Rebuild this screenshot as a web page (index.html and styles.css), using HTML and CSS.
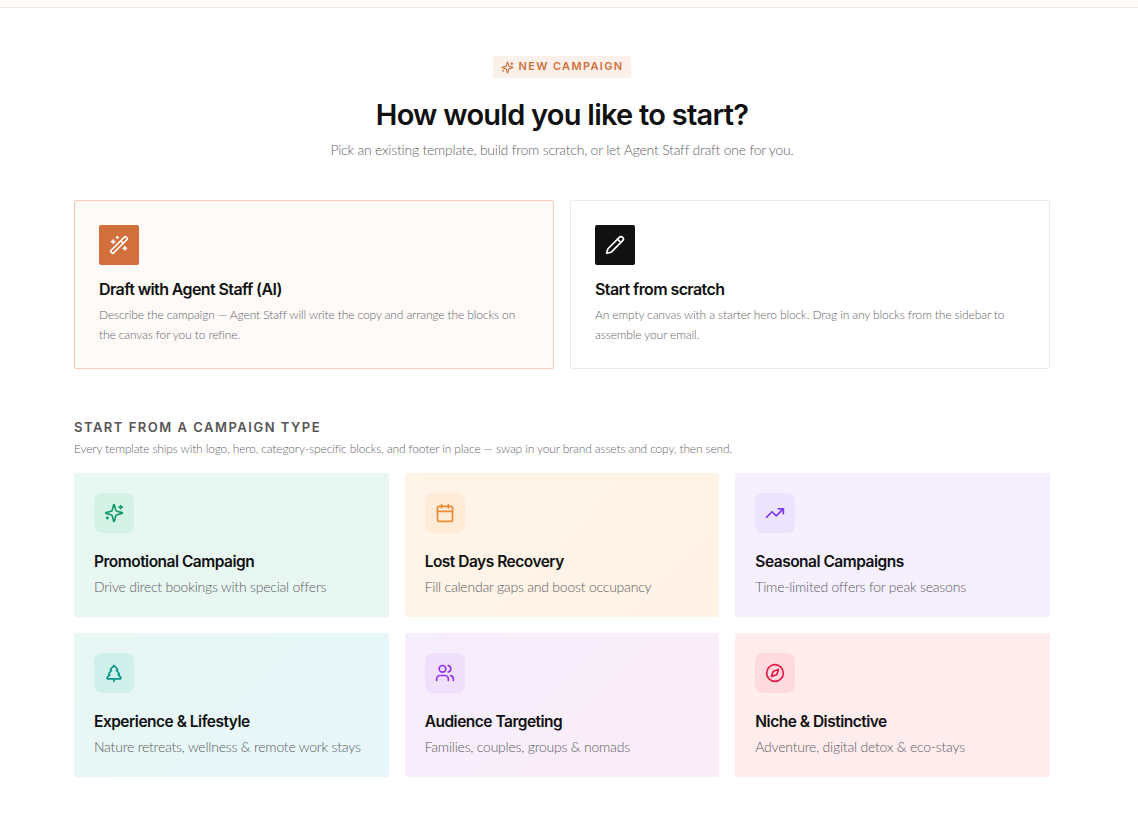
FILE: index.html
```html
<!DOCTYPE html>
<html lang="en">
<head>
<meta charset="utf-8">
<title>New campaign</title>
<link rel="stylesheet" href="styles.css">
</head>
<body>
<div class="topbar"></div>
<main class="page">
  <header class="hero">
    <span class="pill">
      <svg class="i i-12" viewBox="0 0 24 24"><path d="M9.937 15.5A2 2 0 0 0 8.5 14.063l-6.135-1.582a.5.5 0 0 1 0-.962L8.5 9.936A2 2 0 0 0 9.937 8.5l1.582-6.135a.5.5 0 0 1 .963 0L14.063 8.5A2 2 0 0 0 15.5 9.937l6.135 1.581a.5.5 0 0 1 0 .964L15.5 14.063a2 2 0 0 0-1.437 1.437l-1.582 6.135a.5.5 0 0 1-.963 0z"/><path d="M20 3v4M22 5h-4M4 17v2M5 18H3"/></svg>
      NEW CAMPAIGN
    </span>
    <h1>How would you like to start?</h1>
    <p class="lead">Pick an existing template, build from scratch, or let Agent Staff draft one for you.</p>
  </header>

  <section class="starts">
    <article class="start start-ai">
      <div class="start-icon icon-orange">
        <svg class="i i-20" viewBox="0 0 24 24"><path d="m21.64 3.64-1.28-1.28a1.21 1.21 0 0 0-1.72 0L2.36 18.64a1.21 1.21 0 0 0 0 1.72l1.28 1.28a1.2 1.2 0 0 0 1.72 0L21.64 5.36a1.2 1.2 0 0 0 0-1.72"/><path d="m14 7 3 3M5 6v4M19 14v4M10 2v2M7 8H3M21 16h-4M11 3H9"/></svg>
      </div>
      <h2>Draft with Agent Staff (AI)</h2>
      <p>Describe the campaign — Agent Staff will write the copy and arrange the blocks on the canvas for you to refine.</p>
    </article>
    <article class="start">
      <div class="start-icon icon-black">
        <svg class="i i-20" viewBox="0 0 24 24"><path d="M21.174 6.812a1 1 0 0 0-3.986-3.987L3.842 16.174a2 2 0 0 0-.5.83l-1.321 4.352a.5.5 0 0 0 .623.622l4.353-1.32a2 2 0 0 0 .83-.497z"/><path d="m15 5 4 4"/></svg>
      </div>
      <h2>Start from scratch</h2>
      <p>An empty canvas with a starter hero block. Drag in any blocks from the sidebar to assemble your email.</p>
    </article>
  </section>

  <section class="types">
    <h3>START FROM A CAMPAIGN TYPE</h3>
    <p class="types-sub">Every template ships with logo, hero, category-specific blocks, and footer in place — swap in your brand assets and copy, then send.</p>
    <div class="grid">
      <article class="type t-green">
        <div class="type-icon"><svg class="i i-20" viewBox="0 0 24 24"><path d="M9.937 15.5A2 2 0 0 0 8.5 14.063l-6.135-1.582a.5.5 0 0 1 0-.962L8.5 9.936A2 2 0 0 0 9.937 8.5l1.582-6.135a.5.5 0 0 1 .963 0L14.063 8.5A2 2 0 0 0 15.5 9.937l6.135 1.581a.5.5 0 0 1 0 .964L15.5 14.063a2 2 0 0 0-1.437 1.437l-1.582 6.135a.5.5 0 0 1-.963 0z"/><path d="M20 3v4M22 5h-4M4 17v2M5 18H3"/></svg></div>
        <h4>Promotional Campaign</h4>
        <p>Drive direct bookings with special offers</p>
      </article>
      <article class="type t-orange">
        <div class="type-icon"><svg class="i i-20" viewBox="0 0 24 24"><path d="M8 2v4M16 2v4M3 10h18"/><rect x="3" y="4" width="18" height="18" rx="2"/></svg></div>
        <h4>Lost Days Recovery</h4>
        <p>Fill calendar gaps and boost occupancy</p>
      </article>
      <article class="type t-violet">
        <div class="type-icon"><svg class="i i-20" viewBox="0 0 24 24"><path d="M22 7l-8.500 8.500-5-5L2 17"/><path d="M16 7h6v6"/></svg></div>
        <h4>Seasonal Campaigns</h4>
        <p>Time-limited offers for peak seasons</p>
      </article>
      <article class="type t-teal">
        <div class="type-icon"><svg class="i i-20" viewBox="0 0 24 24"><path d="m17 14 3 3.300a1 1 0 0 1-.7 1.700H4.700a1 1 0 0 1-.7-1.700L7 14h-.3a1 1 0 0 1-.7-1.700L9 9h-.2A1 1 0 0 1 8 7.300L12 3l4 4.300a1 1 0 0 1-.8 1.700H15l3 3.300a1 1 0 0 1-.7 1.700H17Z"/><path d="M12 22v-3"/></svg></div>
        <h4>Experience &amp; Lifestyle</h4>
        <p>Nature retreats, wellness &amp; remote work stays</p>
      </article>
      <article class="type t-purple">
        <div class="type-icon"><svg class="i i-20" viewBox="0 0 24 24"><path d="M16 21v-2a4 4 0 0 0-4-4H6a4 4 0 0 0-4 4v2"/><circle cx="9" cy="7" r="4"/><path d="M22 21v-2a4 4 0 0 0-3-3.870M16 3.130a4 4 0 0 1 0 7.750"/></svg></div>
        <h4>Audience Targeting</h4>
        <p>Families, couples, groups &amp; nomads</p>
      </article>
      <article class="type t-rose">
        <div class="type-icon"><svg class="i i-20" viewBox="0 0 24 24"><circle cx="12" cy="12" r="10"/><path d="M16.240 7.760l-2.120 6.360-6.360 2.120 2.120-6.360z"/></svg></div>
        <h4>Niche &amp; Distinctive</h4>
        <p>Adventure, digital detox &amp; eco-stays</p>
      </article>
    </div>
  </section>
</main>
</body>
</html>
```

FILE: styles.css
```css
* { box-sizing: border-box; }
html, body { margin: 0; padding: 0; }
body {
  background: #fff;
  color: #111;
  font-family: "Inter", "Liberation Sans", sans-serif;
  height: 816px;
  overflow: hidden;
}
h1, h2, h3, h4, p { margin: 0; }
p { font-family: "Lato", "Liberation Sans", sans-serif; }
.topbar { height: 8px; background: #fdfcfa; border-bottom: 1px solid #ece9e4; }
.page { width: 976px; margin-left: 74px; padding-top: 48px; }
.i { fill: none; stroke: currentColor; stroke-width: 2; stroke-linecap: round; stroke-linejoin: round; display: block; flex: none; }
.i-12 { width: 13px; height: 13px; }
.i-20 { width: 20px; height: 20px; }

.hero { display: flex; flex-direction: column; align-items: center; }
.pill {
  display: inline-flex; align-items: center; gap: 5px;
  height: 22px; padding: 0 8px 2px;
  background: #fbf1ea; color: #d1703c;
  border-radius: 2px;
  font-size: 11px; font-weight: 600; letter-spacing: 1.33px;
}
.pill .i { margin-top: 2px; }
h1 { margin-top: 18px; font-size: 29px; line-height: 38px; font-weight: 600; letter-spacing: -0.75px; color: #111; }
.lead { margin-top: 6px; font-size: 14px; line-height: 20px; font-weight: 300; letter-spacing: -0.23px; color: #5f5f66; }

.starts { display: grid; grid-template-columns: 1fr 1fr; gap: 16px; margin-top: 40px; }
.start { height: 169px; padding: 24px; background: #fff; border: 1px solid #ebebeb; border-radius: 2px; }
.start-ai { background: #fdfaf8; border-color: #f3cdb7; }
.start-icon { width: 40px; height: 40px; border-radius: 2px; display: flex; align-items: center; justify-content: center; color: #fff; }
.icon-orange { background: #d1703c; }
.icon-black { background: #111; }
.start h2 { margin-top: 13px; font-size: 16px; line-height: 22px; font-weight: 600; letter-spacing: -0.6px; color: #111; }
.start p { margin-top: 5px; font-size: 12px; line-height: 20px; font-weight: 300; letter-spacing: -0.125px; color: #66666c; }

.types { margin-top: 48px; }
h3 { font-size: 13px; line-height: 20px; font-weight: 600; letter-spacing: 1.5px; color: #555; }
.types-sub { margin-top: 4px; font-size: 12px; line-height: 16px; font-weight: 300; letter-spacing: -0.147px; color: #66666c; }
.grid { display: grid; grid-template-columns: repeat(3, 1fr); gap: 16px; margin-top: 16px; }
.type { height: 144px; padding: 20px; border-radius: 2px; }
.type-icon { width: 40px; height: 40px; border-radius: 8px; display: flex; align-items: center; justify-content: center; }
.type h4 { margin-top: 17px; font-size: 15.500px; line-height: 24px; font-weight: 600; letter-spacing: -0.5px; color: #111; }
.type p { margin-top: 3px; font-size: 14px; line-height: 20px; font-weight: 300; letter-spacing: -0.22px; color: #5c5c62; }

.t-green { background: linear-gradient(135deg, #e7f7f1, #e9f7f3); }
.t-green .type-icon { background: #d5f2e7; color: #149a6a; }
.t-orange { background: linear-gradient(135deg, #fff4e8, #fff3e6); }
.t-orange .type-icon { background: #ffecd8; color: #ea8a35; }
.t-violet { background: #f5effe; }
.t-violet .type-icon { background: #ece3fd; color: #7c3aed; }
.t-teal { background: linear-gradient(135deg, #e7f7f3, #e8f7fb); }
.t-teal .type-icon { background: #d0f1eb; color: #0d9488; }
.t-purple { background: linear-gradient(135deg, #f6edfd, #fceef8); }
.t-purple .type-icon { background: #f1e0fc; color: #9333ea; }
.t-rose { background: #ffedee; }
.t-rose .type-icon { background: #ffdade; color: #e11d48; }
```
